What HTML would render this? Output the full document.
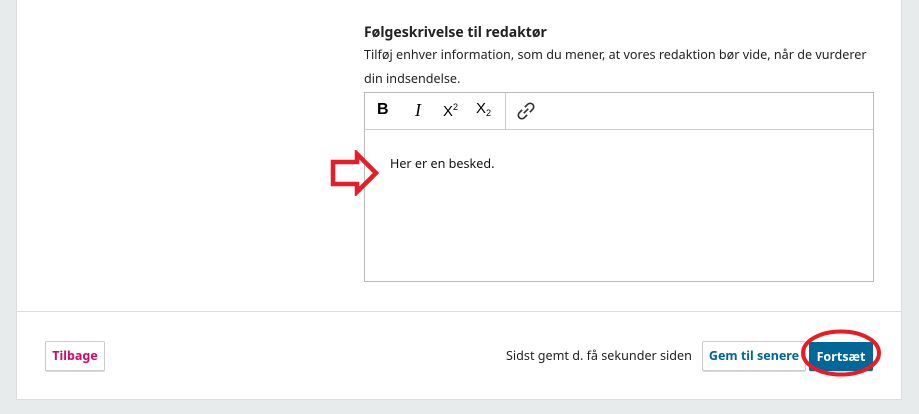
<!DOCTYPE html>
<html><head><style>
body{margin:0;width:919px;height:414px;background:#e8ebeb;position:relative;font-family:"Noto Sans","Liberation Sans",sans-serif;overflow:hidden}
.panel{position:absolute;left:16px;top:0;width:886px;height:400px;background:#fff;border:1px solid #ddd;border-top:none;box-sizing:border-box}
.div{position:absolute;left:16px;width:886px;top:311px;height:1px;background:#ddd}
.t{position:absolute;color:#222}
.ed{position:absolute;left:364px;top:92px;width:510px;height:190px;border:1px solid #bbb;box-sizing:border-box}
.tb{height:36px;border-bottom:1px solid #ccc;position:relative}
.btn{position:absolute;height:30px;box-sizing:border-box;border:1px solid #ccc;border-radius:2px;font-weight:bold;font-size:12.5px;line-height:28px;text-align:center;background:#fff;box-shadow:0 1px 0 #ddd;white-space:nowrap}
</style></head><body>
<div class="panel"></div>
<div class="div"></div>
<div class="t" style="left:364px;top:23px;font-size:14px;font-weight:bold">Følgeskrivelse til redaktør</div>
<div class="t" style="left:364px;top:43px;font-size:12.6px;line-height:24px;width:520px">Tilføj enhver information, som du mener, at vores redaktion bør vide, når de vurderer din indsendelse.</div>
<div class="ed"><div class="tb">
<span style="position:absolute;left:12px;top:8px;font-size:16px;font-weight:bold;font-family:'Liberation Sans',sans-serif">B</span>
<span style="position:absolute;left:50px;top:7px;font-size:18px;font-style:italic;font-family:'Liberation Serif',serif">I</span>
<span style="position:absolute;left:78px;top:9px;font-size:15px;font-family:'Liberation Sans',sans-serif">X<sup style="font-size:9px;vertical-align:6px">2</sup></span>
<span style="position:absolute;left:111px;top:7px;font-size:15px;font-family:'Liberation Sans',sans-serif">X<span style="font-size:9px;vertical-align:-3px">2</span></span>
<div style="position:absolute;left:140px;top:0;width:1px;height:36px;background:#ccc"></div>
<svg style="position:absolute;left:151px;top:8px" width="20" height="20" viewBox="0 0 18 18" fill="none" stroke="#333" stroke-width="1.5"><path d="M7 11l4-4"/><path d="M8 5.5l2.5-2.5a3 3 0 0 1 4.5 4.5l-2.5 2.5"/><path d="M10 12.5l-2.5 2.5a3 3 0 0 1-4.5-4.5l2.5-2.5"/></svg>
</div>
<div style="position:absolute;left:25px;top:62px;font-size:12.6px;color:#111">Her er en besked.</div>
</div>
<svg style="position:absolute;left:329px;top:150px" width="52" height="46" viewBox="0 0 52 46"><path d="M4 12h24V4l19 19-19 19v-8H4z" fill="none" stroke="#e81c24" stroke-width="4.5" stroke-linejoin="miter"/></svg>
<div class="btn" style="left:45px;top:341px;width:60px;color:#d00a6c">Tilbage</div>
<div class="t" style="left:506px;top:347px;font-size:12.6px">Sidst gemt d. få sekunder siden</div>
<div class="btn" style="left:702px;top:341px;width:104px;color:#006798">Gem til senere</div>
<div class="btn" style="left:809px;top:342px;width:64px;height:29px;background:#006798;border-color:#006798;color:#fff">Fortsæt</div>
<svg style="position:absolute;left:799px;top:328px" width="84" height="50" viewBox="0 0 84 50"><ellipse cx="42" cy="25" rx="38" ry="21.5" fill="none" stroke="#e81c24" stroke-width="4"/></svg>
</body></html>
